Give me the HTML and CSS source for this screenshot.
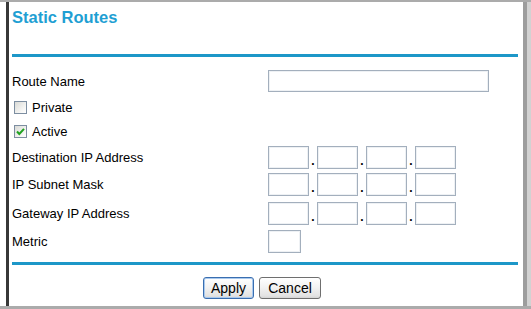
FILE: index.html
```html
<!DOCTYPE html>
<html lang="en">
<head>
  <meta charset="UTF-8">
  <title>Static Routes</title>
  <link rel="stylesheet" href="styles.css">
</head>
<body>

<div class="screen">
  <div class="frame">
    <h1 class="title">Static Routes</h1>
    <div class="rule"></div>

    <form class="routes">
      <div class="row row-name">
        <label class="label">Route Name</label>
        <input type="text" class="field field-wide">
      </div>

      <div class="row row-private">
        <span class="box"></span>
        <span>Private</span>
      </div>

      <div class="row row-active">
        <span class="box">
          <svg width="11" height="11" viewBox="0 0 11 11"><polyline points="2,5.5 4.3,8 9,2.8" fill="none" stroke="#21a321" stroke-width="2"/></svg>
        </span>
        <span>Active</span>
      </div>

      <!-- dotted IP fields -->
      <div class="row row-dest">
        <label class="label">Destination IP Address</label>
        <div class="ip">
          <input type="text" class="field oct"><span class="dot">.</span><input type="text" class="field oct"><span class="dot">.</span><input type="text" class="field oct"><span class="dot">.</span><input type="text" class="field oct">
        </div>
      </div>

      <div class="row row-mask">
        <label class="label">IP Subnet Mask</label>
        <div class="ip">
          <input type="text" class="field oct"><span class="dot">.</span><input type="text" class="field oct"><span class="dot">.</span><input type="text" class="field oct"><span class="dot">.</span><input type="text" class="field oct">
        </div>
      </div>

      <div class="row row-gw">
        <label class="label">Gateway IP Address</label>
        <div class="ip">
          <input type="text" class="field oct"><span class="dot">.</span><input type="text" class="field oct"><span class="dot">.</span><input type="text" class="field oct"><span class="dot">.</span><input type="text" class="field oct">
        </div>
      </div>

      <div class="row row-metric">
        <label class="label">Metric</label>
        <input type="text" class="field metric">
      </div>
    </form>

    <div class="rule rule-bottom"></div>

    <div class="buttons">
      <button type="button" class="btn btn-default">Apply</button>
      <button type="button" class="btn">Cancel</button>
    </div>
  </div>
</div>

</body>
</html>
```

FILE: styles.css
```css
body {
  margin: 0;
  background: #fff;
  font-family: "Liberation Sans", Arial, sans-serif;
  font-size: 13px;
  color: #000;
}

.screen {
  width: 531px;
  height: 309px;
  box-sizing: border-box;
  overflow: hidden;
  border-top: 2px solid #ababab;
  border-bottom: 3px solid #ababab;
  padding-left: 6px;
  background: #fff;
}

.frame {
  width: 521px;
  height: 100%;
  box-sizing: border-box;
  border-left: 3px solid #383838;
  border-right: 4px solid #9d9d9d;
  box-shadow: 4px 0 0 #d2d2d2;
  padding: 6px 5px 0 3px;
}

.title {
  margin: 0;
  font-size: 16.5px;
  line-height: 19px;
  font-weight: bold;
  color: #1f9fd3;
}

.rule {
  height: 3px;
  background: #1d97c8;
  margin-top: 27px;
}

.routes {
  margin: 10px 0 0;
}

.row {
  display: flex;
  align-items: center;
}

.row-name { height: 28px; }
.row-private { height: 24px; }
.row-active { height: 25px; }
.row-dest { height: 26px; }
.row-mask { height: 29px; }
.row-gw { height: 28px; }
.row-metric { height: 28px; }

.label {
  width: 256px;
  flex: none;
}

.row-private, .row-active {
  padding-left: 2px;
  gap: 5px;
}

.box {
  width: 13px;
  height: 13px;
  box-sizing: border-box;
  border: 1px solid #7d8ea1;
  background: linear-gradient(135deg, #d9dad6, #f6f6f4 70%, #fff);
  display: flex;
  align-items: center;
  justify-content: center;
}

.field {
  box-sizing: border-box;
  margin: 0;
  padding: 0 3px;
  border: 1px solid #a3afbd;
  box-shadow: inset 0 0 0 1px #eef1f4;
  background: #fff;
  font: inherit;
  outline: none;
}

.field-wide {
  width: 221px;
  height: 22px;
}

.ip {
  display: flex;
  align-items: flex-end;
}

.oct {
  width: 41px;
  height: 23px;
}

.dot {
  width: 8px;
  text-align: center;
  font-weight: bold;
  font-size: 12px;
  line-height: 10px;
  margin-bottom: 3px;
}

.metric {
  width: 33px;
  height: 23px;
}

.rule-bottom {
  margin-top: 7px;
}

.buttons {
  display: flex;
  justify-content: center;
  gap: 5px;
  margin-top: 12px;
  padding-right: 6px;
}

.btn {
  height: 22px;
  padding: 0;
  border: 1px solid #6f6f6f;
  border-radius: 3px;
  background: linear-gradient(#ffffff, #f1f1f1 50%, #e2e2e2 90%, #d3d3d3);
  font-family: "Liberation Sans", Arial, sans-serif;
  font-size: 14px;
  color: #000;
  width: 62px;
}

.btn-default {
  width: 51px;
  border-color: #3a6eb0;
  box-shadow: inset 0 0 0 1px #a9c9ee;
}
```
